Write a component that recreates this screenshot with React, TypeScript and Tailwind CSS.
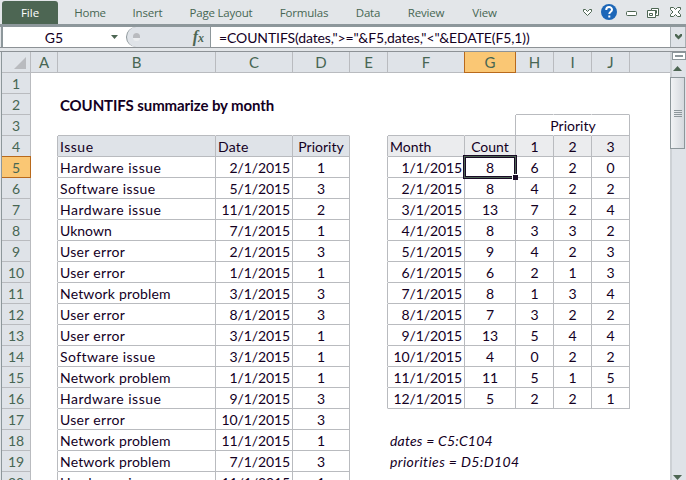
import React from "react";

const SHEET = "font-['Lato',sans-serif]";

type Align = "l" | "r" | "c";
type Cell = { t?: string; a?: Align; r?: boolean; b?: boolean; bg?: string; cls?: string };

const COLS = ["A", "B", "C", "D", "E", "F", "G", "H", "I", "J", ""];
const W = [
  "w-[27px]", "w-[158px]", "w-[77px]", "w-[57px]", "w-[38px]", "w-[77px]",
  "w-[51px]", "w-[38px]", "w-[38px]", "w-[38px]", "w-[40px]",
];

const ISSUE_TRACKING: Record<string, string> = {
  "Hardware issue": "tracking-[0.5px]",
  "Software issue": "tracking-[0.42px]",
  "User error": "tracking-[0.3px]",
  "Network problem": "tracking-[0.18px]",
};

const issues: [string, string, string][] = [
  ["Hardware issue", "2/1/2015", "1"],
  ["Software issue", "5/1/2015", "3"],
  ["Hardware issue", "11/1/2015", "2"],
  ["Uknown", "7/1/2015", "1"],
  ["User error", "2/1/2015", "3"],
  ["User error", "1/1/2015", "1"],
  ["Network problem", "3/1/2015", "3"],
  ["User error", "8/1/2015", "3"],
  ["User error", "3/1/2015", "1"],
  ["Software issue", "3/1/2015", "1"],
  ["Network problem", "1/1/2015", "1"],
  ["Hardware issue", "9/1/2015", "3"],
  ["User error", "10/1/2015", "3"],
  ["Network problem", "11/1/2015", "1"],
  ["Network problem", "7/1/2015", "3"],
  ["Hardware issue", "11/1/2015", "1"],
];

const summary: number[][] = [
  [8, 6, 2, 0], [8, 4, 2, 2], [13, 7, 2, 4], [8, 3, 3, 2], [9, 4, 2, 3], [6, 2, 1, 3],
  [8, 1, 3, 4], [7, 3, 2, 2], [13, 5, 4, 4], [4, 0, 2, 2], [11, 5, 1, 5], [5, 2, 2, 1],
];

function cellAt(row: number, col: number): Cell {
  const c: Cell = {};
  const name = COLS[col];
  if (row === 2 && name === "B") return { t: "COUNTIFS summarize by month", cls: "font-bold text-[15px] tracking-[-0.1px]" };
  if (row === 2 && "HIJ".includes(name) && name) return { b: true };
  if (row === 3) {
    if (name === "G") return { r: true, b: true };
    if (name === "H") return { b: true };
    if (name === "I") return { b: true, t: "Priority", a: "c", cls: "pl-px" };
    if (name === "J") return { b: true, r: true };
    if (["B", "C", "D", "F"].includes(name)) return { b: true };
  }
  if (row >= 4) {
    if (name === "A") c.r = true;
    if (["B", "C", "D"].includes(name)) {
      c.r = c.b = true;
      const k = "BCD".indexOf(name);
      if (row === 4) {
        c.t = ["Issue", "Date", "Priority"][k];
        c.bg = "bg-[#dfe3e8]";
        c.a = k === 2 ? "c" : "l";
        c.cls = ["tracking-[0.5px]", "tracking-[0.2px]", ""][k];
      } else {
        c.t = issues[row - 5][k];
        c.a = (["l", "r", "c"] as Align[])[k];
        c.cls = k === 0 ? ISSUE_TRACKING[c.t] : k === 1 ? "tracking-[-0.1px]" : "";
      }
    }
    if (row <= 16) {
      if (name === "E") c.r = true;
      const k = ["F", "G", "H", "I", "J"].indexOf(name);
      if (k >= 0) {
        c.r = c.b = true;
        if (row === 4) {
          c.t = ["Month", "Count", "1", "2", "3"][k];
          c.bg = "bg-[#ebecee]";
          c.a = k === 0 ? "l" : "c";
        } else if (k === 0) {
          c.t = `${row - 4}/1/2015`;
          c.a = "r";
          c.cls = "tracking-[-0.1px]";
        } else {
          c.t = String(summary[row - 5][k - 1]);
          c.a = "c";
        }
      }
    }
    if (row === 18 && name === "F") return { t: "dates = C5:C104", cls: "italic tracking-[0.2px]" };
    if (row === 19 && name === "F") return { t: "priorities = D5:D104", cls: "italic tracking-[0.4px]" };
  }
  return c;
}

function GridCell({ row, col }: { row: number; col: number }) {
  const c = cellAt(row, col);
  const just = c.a === "r" ? "justify-end pr-[2px]" : c.a === "c" ? "justify-center" : "pl-[2px]";
  const selected = row === 5 && COLS[col] === "G";
  return (
    <div
      className={`relative flex h-[21px] shrink-0 items-center border-r border-b pt-[2px] ${W[col]} ${just} ${c.bg ?? ""} ${
        c.r ? "border-r-[#b9bbbf]" : "border-r-transparent"
      } ${c.b ? "border-b-[#b9bbbf]" : "border-b-transparent"}`}
    >
      <span className={`whitespace-nowrap leading-5 ${c.cls?.includes("text-[15px]") ? "" : "text-[14px]"} ${c.cls ?? ""}`}>{c.t}</span>
      {selected && (
        <div className="absolute -top-[2px] -left-[2px] z-10 h-[24px] w-[54px] border-[3px] border-[#1a0a26]">
          <div className="absolute -inset-[2px] border border-[#4d6653]" />
          <div className="absolute -right-[4px] -bottom-[4px] h-[6px] w-[6px] border-t border-l border-white bg-[#1a0a26]" />
        </div>
      )}
    </div>
  );
}

const TABS: [string, string][] = [
  ["Home", "w-[58px]"], ["Insert", "w-[57px]"], ["Page Layout", "w-[90px]"], ["Formulas", "w-[76px]"],
  ["Data", "w-[52px]"], ["Review", "w-[64px]"], ["View", "w-[53px]"],
];

function Ribbon() {
  return (
    <div className="flex h-6 items-start bg-[#e3e6e9] pl-[2px] font-['Open_Sans',sans-serif] text-[11.5px] text-[#476653]">
      <div className="mt-px flex h-[23px] w-[56px] items-center justify-center rounded-t-[3px] bg-[#4d6653] text-white">File</div>
      <div className="ml-[3px] flex h-6 items-center">
        {TABS.map(([t, w]) => (
          <div key={t} className={`flex h-6 items-center justify-center pt-[2px] whitespace-nowrap tracking-[-0.2px] ${w}`}>{t}</div>
        ))}
      </div>
      <svg className="ml-auto" width="108" height="24" viewBox="578 0 108 24" fill="none" stroke="#4d6653">
        <path d="M583.5 9.5h2l2 2 2-2h2v2l-4 4-4-4z" fill="#fff" />
        <circle cx="609" cy="12" r="8" fill="#1d67b8" stroke="none" />
        <path d="M606.2 10c0-3.800 5.800-3.800 5.800-.3 0 2-2.700 2-2.700 4.200M609.300 15.500v2" stroke="#fff" strokeWidth="2" />
        <rect x="626.5" y="11.5" width="10" height="4" rx="1" fill="#fff" />
        <path d="M651.500 8.500h7v7h-3v2h-8v-7h4z" fill="#fff" />
        <path d="M651.500 10.500h4v5M649.500 13.500h3v2h-3zM653.500 10.500h3v3" />
        <path d="M670.500 7.500h3l2 2 2-2h3v2l-2.500 2.500 2.500 2.500v2h-3l-2-2-2 2h-3v-2l2.500-2.500-2.500-2.500z" fill="#fff" />
      </svg>
    </div>
  );
}

function FormulaBar() {
  return (
    <div className={`flex h-6 shrink-0 border-t-[3px] border-b border-[#8d979b] border-b-[#8d9296] pl-px ${SHEET}`}>
      <div className="w-[2px] bg-[#8d979b]" />
      <div className="flex w-[123px] items-center bg-white">
        <span className="w-[102px] pt-px text-center text-[14px] leading-5">G5</span>
        <svg width="8" height="5" className="ml-[6px]"><path d="M0 0h7L3.500 4z" fill="#4d6653" /></svg>
      </div>
      <div className="flex flex-1 bg-white">
        <div className="flex w-[84px] items-center rounded-l-full border-l border-[#8d979b] bg-[#dfe3e8]">
          <div className="ml-[6px] flex h-[8px] w-[7px] flex-col overflow-hidden rounded-full bg-[#eceef0]">
            <div className="h-[5px] bg-[#b9bbbf]" />
          </div>
          <span className="ml-auto flex items-baseline pr-[6px] font-['Liberation_Serif',serif] text-[16px] leading-none font-bold text-[#4d6653] italic">
            f<span className="text-[12px]">x</span>
          </span>
        </div>
        <div className="flex flex-1 items-center border-l border-[#8d979b] bg-white pl-[8px]">
          <span className="pt-px text-[14px] leading-5 tracking-[-0.11px] whitespace-nowrap">{'=COUNTIFS(dates,">="&F5,dates,"<"&EDATE(F5,1))'}</span>
        </div>
      </div>
      <div className="flex w-[16px] items-center justify-center border-x border-[#a9b0b4] bg-[#dfe3e8]">
        <svg width="7" height="6"><path d="M0 0h1.500l2 2 2-2H7v2L3.500 5.500 0 2z" fill="#4d6653" /></svg>
      </div>
    </div>
  );
}

function Scrollbar() {
  return (
    <div className="flex w-4 flex-col border-l-2 border-[#cdd1d5] bg-[#dfe3e8]">
      <div className="h-2 border border-[#8d979b] bg-white p-px pr-[2px]"><div className="mt-px ml-px h-[2px] bg-[#8d979b]" /></div>
      <svg width="14" height="17"><path d="M1 11h9L5.500 6z" fill="#4d6653" /></svg>
      <div className="-ml-[2px] flex h-[72px] w-[15px] flex-col items-center justify-center gap-px border border-[#8d979b] bg-gradient-to-r from-[#f1f3f5] to-[#d5d9de]">
        <div className="h-px w-2 bg-[#8d979b]" /><div className="h-px w-2 bg-[#8d979b]" />
        <div className="h-px w-2 bg-[#8d979b]" /><div className="h-px w-2 bg-[#8d979b]" />
      </div>
      <svg className="mt-auto" width="14" height="5"><path d="M1 0h9L5.500 5z" fill="#4d6653" /></svg>
    </div>
  );
}

export default function App() {
  return (
    <div className="flex h-[480px] w-[686px] flex-col overflow-hidden bg-[#e3e6e9] text-[#14001f]">
      <Ribbon />
      <FormulaBar />
      <div className="h-[3px] shrink-0 bg-[#e3e6e9]" />
      <div className="h-px shrink-0 bg-[#8d9296]" />
      <div className={`flex min-h-0 flex-1 pl-px ${SHEET}`}>
        <div className="w-px bg-[#8d979b]" />
        <div className="w-[668px] overflow-hidden bg-white">
          <div className="flex h-[21px] bg-[#dfe3e8] text-[15px] text-[#476653]">
            <div className="flex w-[29px] items-end justify-end border-r border-b border-[#b9bbbf] pr-1 pb-[3px]">
              <svg width="12" height="12"><path d="M12 0v12H0z" fill="#b9bbbf" /></svg>
            </div>
            {COLS.map((n, i) => (
              <div
                key={i}
                className={`relative flex shrink-0 items-center justify-center border-b border-[#b9bbbf] pt-px ${i < 10 ? "border-r" : ""} ${W[i]}`}
              >
                {n === "G" && <div className="absolute -left-px top-0 h-[21px] w-[52px] border border-t-0 border-[#b8691c] bg-[#fac774]" />}
                <span className="relative">{n}</span>
              </div>
            ))}
          </div>
          {Array.from({ length: 20 }, (_, i) => i + 1).map((r) => (
            <div key={r} className="flex h-[21px]">
              <div className="relative flex w-[29px] shrink-0 items-center justify-center border-r border-b border-[#b9bbbf] bg-[#dfe3e8] text-[14px] text-[#476653]">
                {r === 5 && <div className="absolute -top-px left-0 h-[22px] w-[29px] border border-l-0 border-[#b8691c] bg-[#fac774]" />}
                <span className="relative">{r}</span>
              </div>
              {COLS.map((_, c) => (
                <GridCell key={c} row={r} col={c} />
              ))}
            </div>
          ))}
        </div>
        <Scrollbar />
      </div>
    </div>
  );
}
